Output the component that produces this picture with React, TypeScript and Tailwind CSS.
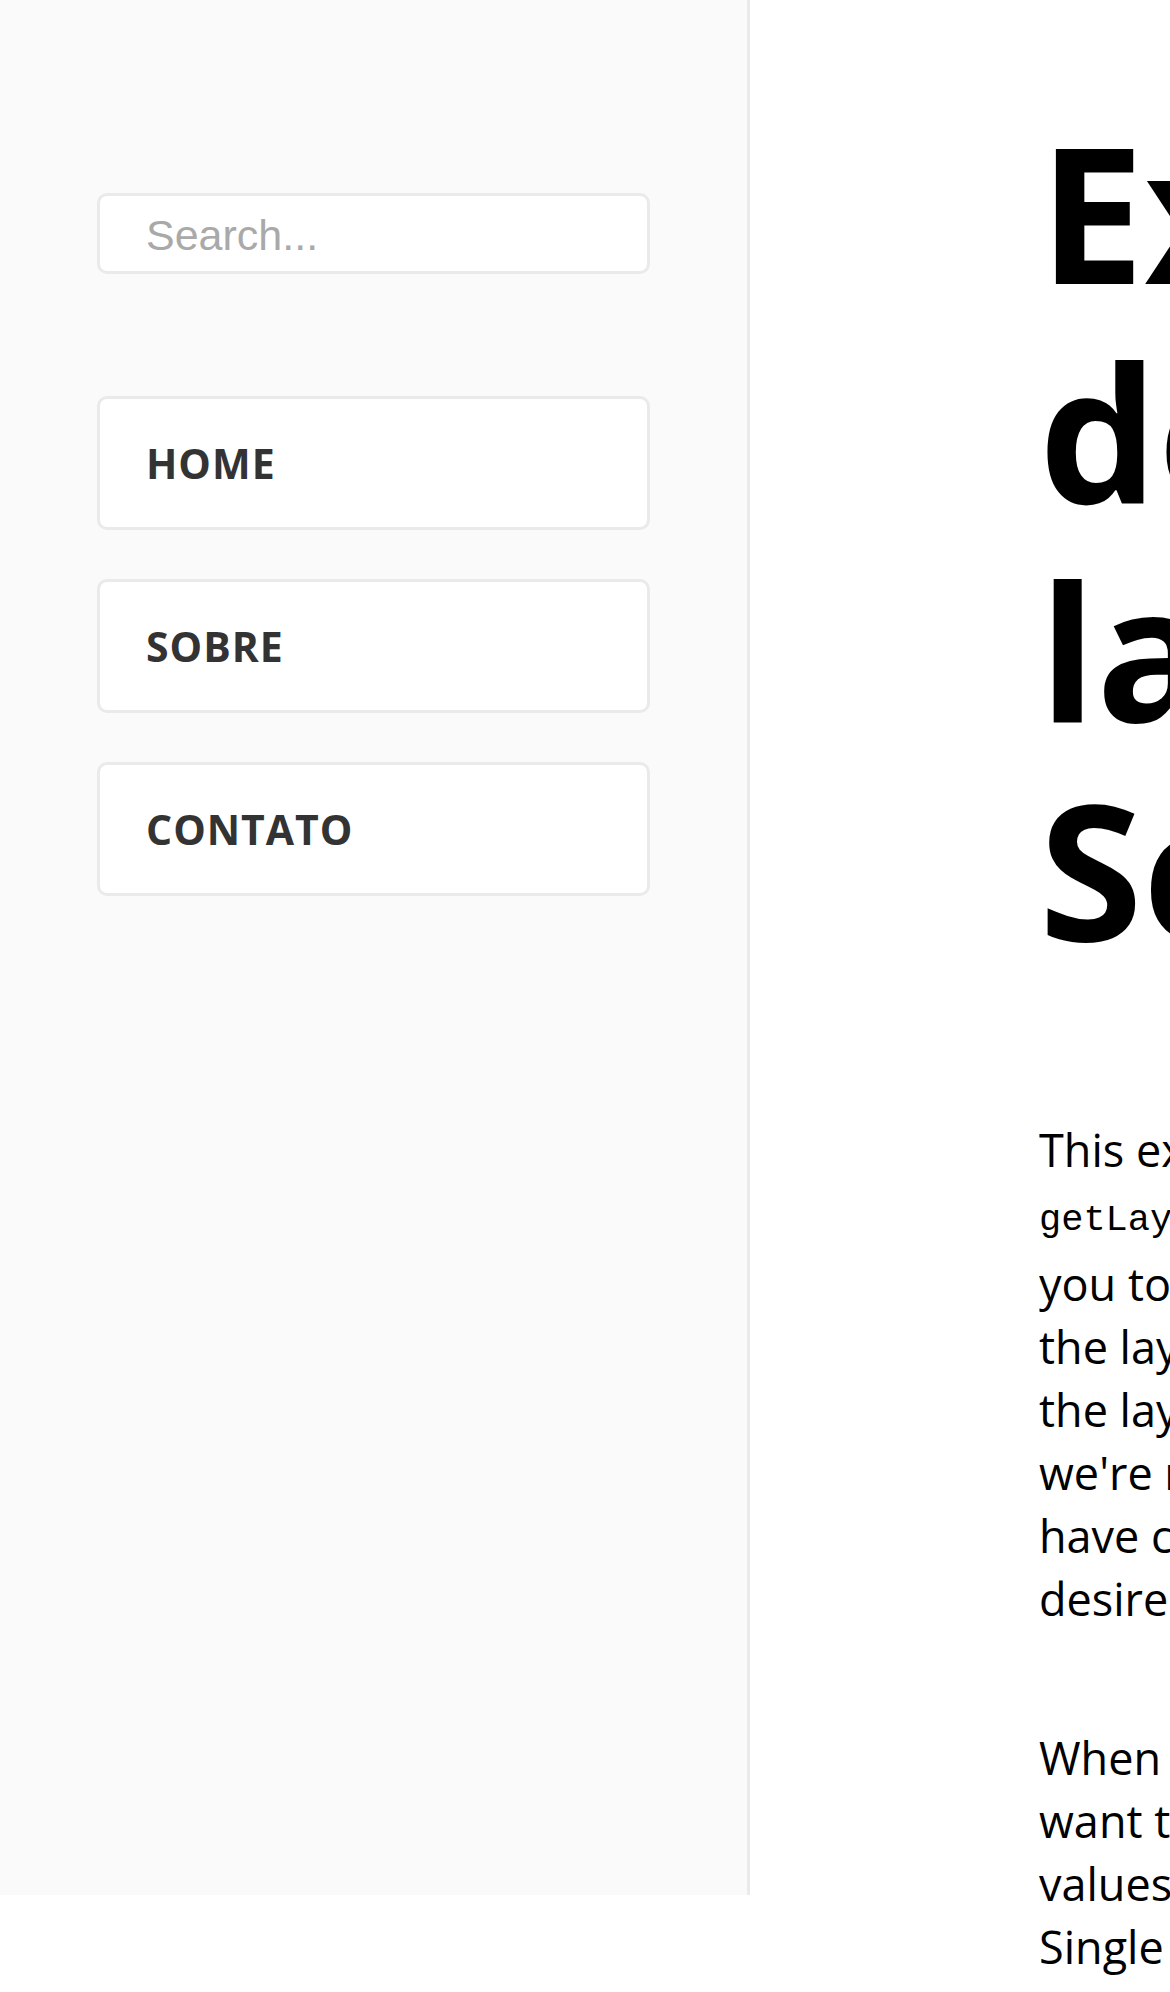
const NAV_LINKS = ["HOME", "SOBRE", "CONTATO"];

export default function App() {
  return (
    <div className="flex h-screen w-full overflow-hidden bg-white font-['Open_Sans',sans-serif]">
      {/* Sidebar */}
      <aside className="h-[1895px] w-[750px] shrink-0 border-r-[3px] border-[#eaeaea] bg-[#fafafa] px-[97px] pt-[193px]">
        <input
          type="text"
          placeholder="Search..."
          className="block h-[81px] w-full rounded-[10px] border-[3px] border-[#eaeaea] bg-white pl-[46px] pt-[4px] font-['Liberation_Sans',Arial,sans-serif] text-[43px] text-[#333] outline-none placeholder:text-[#a9a9a9]"
        />
        <nav className="mt-[122px] flex flex-col gap-[49px]">
          {NAV_LINKS.map((link) => (
            <a
              key={link}
              href="#"
              className="flex h-[134px] items-center rounded-[10px] border-[3px] border-[#eaeaea] bg-white pl-[46px] pt-[2px] text-[41px] font-bold tracking-[1px] text-[#333]"
            >
              {link}
            </a>
          ))}
        </nav>
      </aside>

      {/* Main content */}
      <main className="min-w-0 flex-1 overflow-hidden whitespace-nowrap pl-[289px] pt-[102px] text-black">
        <h1 className="text-[188px] font-bold leading-[219px]">
          Exemplo
          <br />
          de
          <br />
          layout
          <br />
          Seção
        </h1>
        <p className="mt-[140px] text-[45px] leading-[63px]">
          This example adds a property
          <br />
          <code className="font-['Liberation_Mono',monospace] text-[37px]">getLayout</code> to your page, allowing
          <br />
          you to return a React component for
          <br />
          the layout. This allows you to define
          <br />
          the layout on a per-page basis. Since
          <br />
          we're returning a function, we can
          <br />
          have complex nested layouts if
          <br />
          desired.
        </p>
        <p className="mt-[96px] text-[45px] leading-[63px]">
          When navigating between pages, we
          <br />
          want to persist page state (input
          <br />
          values, scroll position, etc.) for a
          <br />
          Single Page Application (SPA)
          <br />
          experience.
        </p>
      </main>
    </div>
  );
}
